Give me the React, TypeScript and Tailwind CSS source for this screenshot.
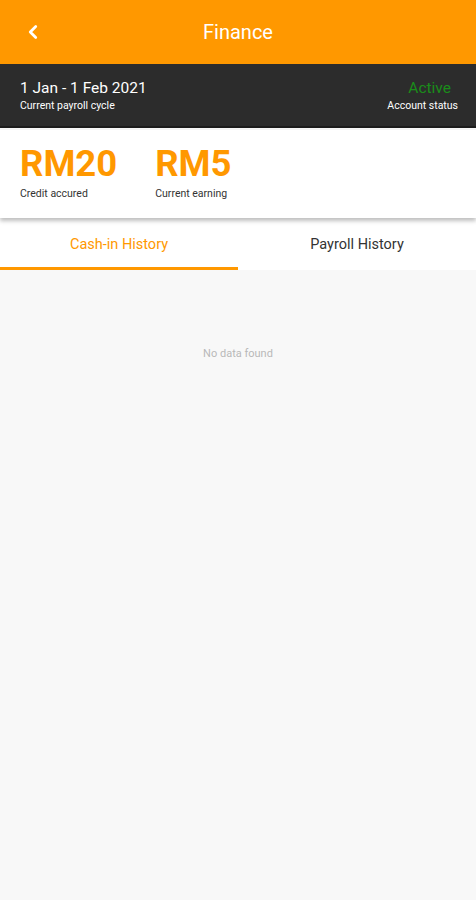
import { ChevronLeft } from 'lucide-react';

const App = () => {
    return (
        <div className="w-[476px] h-[900px] bg-[#f8f8f8] flex flex-col font-['Roboto',sans-serif]">
            {/* Header */}
            <div className="h-[64px] bg-[#ff9800] flex items-center relative shrink-0">
                <button className="absolute left-[22px] text-white">
                    <ChevronLeft size={22} strokeWidth={3} />
                </button>
                <h1 className="w-full text-center text-white text-[20px]">Finance</h1>
            </div>

            {/* Payroll cycle */}
            <div className="h-[64px] bg-[#2c2c2c] flex items-center justify-between px-[20px] pr-[18px] border-b-2 border-[#1c1c1c] shrink-0">
                <div className="flex flex-col">
                    <span className="text-white text-[15.5px] leading-[20px]">1 Jan - 1 Feb 2021</span>
                    <span className="text-white text-[10.5px] leading-[14px] mt-[1px]">Current payroll cycle</span>
                </div>
                <div className="flex flex-col items-end">
                    <span className="text-[#1a8c1a] text-[15.5px] leading-[20px] pr-[7px]">Active</span>
                    <span className="text-white text-[10.5px] leading-[14px] mt-[1px]">Account status</span>
                </div>
            </div>

            {/* Summary card */}
            <div className="bg-white h-[88px] flex gap-[38px] px-[20px] pt-[14px] shadow-[0_3px_4px_rgba(0,0,0,0.25)] mt-[2px] relative z-10 shrink-0">
                <div className="flex flex-col">
                    <span className="text-[#ff9800] text-[36.5px] font-bold leading-[40px]">RM20</span>
                    <span className="text-[#333] text-[10.5px] leading-[14px] mt-[3px]">Credit accured</span>
                </div>
                <div className="flex flex-col">
                    <span className="text-[#ff9800] text-[36.5px] font-bold leading-[40px]">RM5</span>
                    <span className="text-[#333] text-[10.5px] leading-[14px] mt-[3px]">Current earning</span>
                </div>
            </div>

            {/* Tabs */}
            <div className="bg-white flex h-[52px] shrink-0">
                <div className="flex-1 flex items-center justify-center pt-[5px] border-b-[3px] border-[#ff9800] text-[#ff9800] text-[14.5px]">
                    Cash-in History
                </div>
                <div className="flex-1 flex items-center justify-center pt-[5px] border-b-[3px] border-transparent text-[#333] text-[14.5px]">
                    Payroll History
                </div>
            </div>

            <div className="flex-1 flex justify-center pt-[76px]">
                <span className="text-[#b8b8b8] text-[11px]">No data found</span>
            </div>
        </div>
    );
};

export default App;
